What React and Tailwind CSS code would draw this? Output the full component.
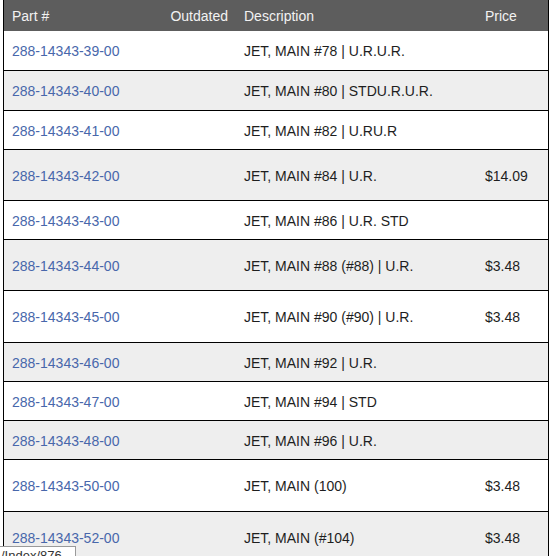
import React from 'react';

const rows = [
    { part: '288-14343-39-00', desc: 'JET, MAIN #78 | U.R.U.R.', price: '', h: 'h-[40px]' },
    { part: '288-14343-40-00', desc: 'JET, MAIN #80 | STDU.R.U.R.', price: '', h: 'h-[40px]' },
    { part: '288-14343-41-00', desc: 'JET, MAIN #82 | U.RU.R', price: '', h: 'h-[39px]' },
    { part: '288-14343-42-00', desc: 'JET, MAIN #84 | U.R.', price: '$14.09', h: 'h-[51px]' },
    { part: '288-14343-43-00', desc: 'JET, MAIN #86 | U.R. STD', price: '', h: 'h-[39px]' },
    { part: '288-14343-44-00', desc: 'JET, MAIN #88 (#88) | U.R.', price: '$3.48', h: 'h-[51px]' },
    { part: '288-14343-45-00', desc: 'JET, MAIN #90 (#90) | U.R.', price: '$3.48', h: 'h-[52px]' },
    { part: '288-14343-46-00', desc: 'JET, MAIN #92 | U.R.', price: '', h: 'h-[39px]' },
    { part: '288-14343-47-00', desc: 'JET, MAIN #94 | STD', price: '', h: 'h-[39px]' },
    { part: '288-14343-48-00', desc: 'JET, MAIN #96 | U.R.', price: '', h: 'h-[39px]' },
    { part: '288-14343-50-00', desc: 'JET, MAIN (100)', price: '$3.48', h: 'h-[52px]' },
    { part: '288-14343-52-00', desc: 'JET, MAIN (#104)', price: '$3.48', h: 'h-[52px]' },
];

const App = () => {
    return (
        <div className="relative h-[556px] overflow-hidden bg-white font-['Liberation_Sans',Arial,sans-serif] text-[14px]">
            <div className="ml-[3px] w-[546px] border-x border-black">
                <div className="flex h-[31px] items-center bg-[#5d5d5d] pt-[2px] text-[#f2f2f2]">
                    <div className="w-[150px] pl-[8px]">Part #</div>
                    <div className="w-[80px] pr-[6px] text-right">Outdated</div>
                    <div className="w-[243px] pl-[10px]">Description</div>
                    <div className="flex-1 pl-[8px]">Price</div>
                </div>
                {rows.map((row, i) => (
                    <div
                        key={row.part}
                        className={`flex items-center border-b border-black pt-[2px] ${row.h} ${
                            i % 2 === 1 ? 'bg-[#eeeeee]' : 'bg-white'
                        }`}
                    >
                        <div className="w-[150px] pl-[8px] text-[#4867ab]">{row.part}</div>
                        <div className="w-[80px]"></div>
                        <div className="w-[243px] pl-[10px] text-[#1e1e1e]">{row.desc}</div>
                        <div className="flex-1 pl-[8px] text-[#1e1e1e]">{row.price}</div>
                    </div>
                ))}
            </div>
            <div className="absolute left-[-2px] top-[546px] h-[20px] w-[78px] overflow-hidden border border-[#9a9a9a] bg-white px-[2px] text-[13px] leading-[18px] text-[#333]">
                /Index/876
            </div>
        </div>
    );
};

export default App;
